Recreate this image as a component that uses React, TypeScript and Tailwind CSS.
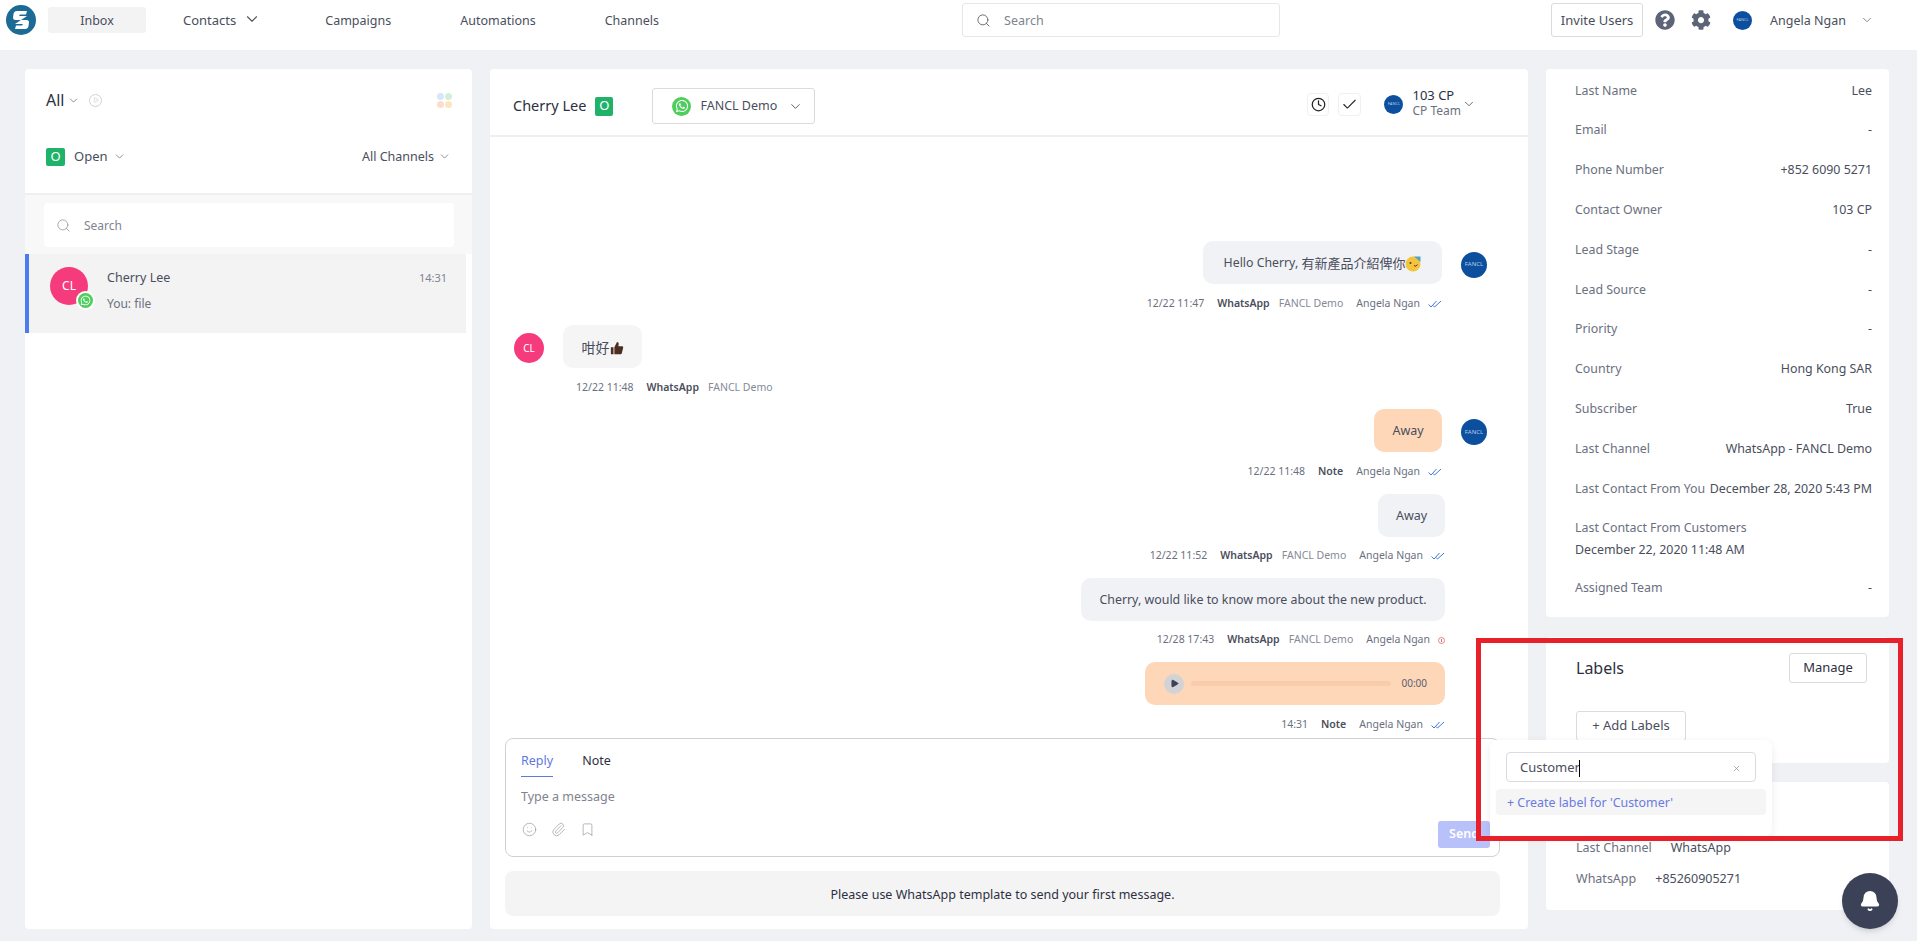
import type { ReactNode } from 'react'
import { Bell, ChevronDown, Paperclip, Search, Bookmark, Smile, Clock, Check, X, Play } from 'lucide-react'
import { FaWhatsapp, FaQuestionCircle, FaCog } from 'react-icons/fa'

const contactFields = [
  ['Last Name', 'Lee'],
  ['Email', '-'],
  ['Phone Number', '+852 6090 5271'],
  ['Contact Owner', '103 CP'],
  ['Lead Stage', '-'],
  ['Lead Source', '-'],
  ['Priority', '-'],
  ['Country', 'Hong Kong SAR'],
  ['Subscriber', 'True'],
  ['Last Channel', 'WhatsApp - FANCL Demo'],
  ['Last Contact From You', 'December 28, 2020 5:43 PM'],
]

function Logo() {
  return (
    <svg viewBox="0 0 30 30" className="w-[30px] h-[30px] shrink-0">
      <circle cx="15" cy="15" r="15" fill="#1c6b94" />
      <path d="M21 6 L11 6 Q8 6 7.5 9 L7 13 Q7 15 9.5 15 L15 15 L21 11 L13 11 L14 9.5 L20 9.5 Z" fill="#fff" />
      <path d="M9 24 L19 24 Q22 24 22.5 21 L23 17 Q23 15 20.500 15 L15 15 L9 19 L17 19 L16 20.500 L10 20.500 Z" fill="#fff" />
    </svg>
  )
}

function Fancl({ size = 26, text = 'text-[6px]' }: { size?: number; text?: string }) {
  return (
    <div
      className={`shrink-0 rounded-full bg-[#0b4f9e] text-[#b9cbe6] flex items-center justify-center ${text}`}
      style={{ width: size, height: size }}
    >
      FANCL
    </div>
  )
}

function WhatsDot({ size, icon }: { size: number; icon: number }) {
  return (
    <div
      className="rounded-full bg-[#4fce5d] flex items-center justify-center text-white shrink-0"
      style={{ width: size, height: size }}
    >
      <FaWhatsapp size={icon} />
    </div>
  )
}

function OBadge({ className }: { className: string }) {
  return <div className={`bg-[#1fb36a] text-white rounded-[2px] flex items-center justify-center ${className}`}>O</div>
}

function Ticks() {
  return (
    <svg viewBox="0 0 14 8" className="w-[14px] h-[8px] ml-[8px]" fill="none" stroke="#3f78d8" strokeWidth="1">
      <path d="M0.5 4.5 L3 7 L8.5 1" />
      <path d="M5 5.5 L6.5 7 L13 1" />
    </svg>
  )
}

function Failed() {
  return (
    <div className="ml-[8px] w-[7px] h-[7px] rounded-full border border-[#e8808a] flex items-center justify-center">
      <span className="w-px h-[3px] bg-[#e8636b]" />
    </div>
  )
}

function Meta({ time, channel, inbox, agent, end }: { time: string; channel: string; inbox?: string; agent?: string; end?: ReactNode }) {
  return (
    <div className="flex items-center text-[10.5px] h-[16px] pt-[2px] text-[#6b7080] whitespace-nowrap">
      <span>{time}</span>
      <span className="ml-[13px] font-semibold text-[#4a4e5c]">{channel}</span>
      {inbox && <span className="ml-[9px] text-[#868a98]">{inbox}</span>}
      {agent && <span className="ml-[13px]">{agent}</span>}
      {end}
    </div>
  )
}

function Bubble({ width, tone, children }: { width: number; tone: string; children: ReactNode }) {
  return (
    <div
      className={`h-[43px] pt-[2px] rounded-[10px] flex items-center justify-center whitespace-nowrap ${tone}`}
      style={{ width }}
    >
      {children}
    </div>
  )
}

export default function App() {
  return (
    <div
      className="relative h-[941px] overflow-hidden bg-[#eff1f5] text-[#4a4e5c] text-[12.5px]"
      style={{ fontFamily: '"Noto Sans", "Noto Sans CJK TC", sans-serif' }}
    >
      {/* top nav */}
      <header className="h-[50px] bg-white flex items-center pl-[6px] pr-[25px] pb-[10px]">
        <Logo />
        <div className="ml-[12px] w-[98px] h-[26px] pt-[2px] bg-[#f3f3f4] rounded-[3px] flex items-center justify-center">Inbox</div>
        <div className="ml-[37px] pt-[2px] flex items-center text-[13px]">
          Contacts
          <ChevronDown size={18} className="ml-[7px] -mt-[4px] text-[#555]" strokeWidth={1.5} />
        </div>
        <div className="ml-[64px] pt-[2px]">Campaigns</div>
        <div className="ml-[69px] pt-[2px]">Automations</div>
        <div className="ml-[69px] pt-[2px]">Channels</div>
        <div className="ml-[303px] w-[318px] h-[34px] border border-[#e6e7eb] rounded-[3px] flex items-center pl-[13px] text-[#80848f]">
          <Search size={15} strokeWidth={1.5} className="text-[#666]" />
          <span className="ml-[13px] pt-[2px]">Search</span>
        </div>
        <button className="ml-[271px] w-[92px] h-[34px] pt-[2px] border border-[#d9dbe0] rounded-[3px] text-[13px] text-[#4a4e5c]">Invite Users</button>
        <FaQuestionCircle size={20} className="ml-[12px] text-[#5d6478]" />
        <FaCog size={20} className="ml-[16px] text-[#5d6478]" />
        <div className="ml-[22px]">
          <Fancl size={19} text="text-[4px]" />
        </div>
        <span className="ml-[18px] pt-[2px]">Angela Ngan</span>
        <ChevronDown size={14} className="ml-[14px] text-[#777]" strokeWidth={1.5} />
      </header>

      <main className="flex pt-[19px] pl-[25px]">
        {/* conversation list */}
        <section className="w-[447px] h-[860px] bg-white rounded-[4px] shrink-0">
          <div className="h-[126px] px-[21px] border-b-2 border-[#eeeff1]">
            <div className="pt-[18px] flex items-center h-[44px] text-[16px] text-[#2d3040]">
              All
              <ChevronDown size={13} className="ml-[3px] text-[#777]" strokeWidth={1.5} />
              <div className="ml-[9px] w-[13px] h-[13px] rounded-full border border-[#cfd2d8] flex items-center justify-center">
                <Play size={6} className="text-[#bbb]" />
              </div>
              <div className="ml-auto -mr-[1px] grid grid-cols-2 gap-[1px]">
                <span className="w-[7px] h-[7px] rounded-full bg-[#d6e7fa]" />
                <span className="w-[7px] h-[7px] rounded-full bg-[#d3efd5]" />
                <span className="w-[7px] h-[7px] rounded-full bg-[#fbdccd]" />
                <span className="w-[7px] h-[7px] rounded-full bg-[#fbe7bf]" />
              </div>
            </div>
            <div className="mt-[34px] flex items-center">
              <OBadge className="w-[19px] h-[18px] text-[13px]" />
              <span className="ml-[9px] text-[13px]">Open</span>
              <ChevronDown size={13} className="ml-[5px] text-[#777]" strokeWidth={1.5} />
              <span className="ml-auto pt-[1px]">All Channels</span>
              <ChevronDown size={13} className="ml-[4px] text-[#777]" strokeWidth={1.5} />
            </div>
          </div>
          <div className="h-[59px] bg-[#f8f8f9] pl-[19px] pr-[18px] pt-[8px]">
            <div className="h-[44px] bg-white rounded-[4px] flex items-center pl-[12px] text-[12px] text-[#80848f]">
              <Search size={15} strokeWidth={1.3} className="text-[#999]" />
              <span className="ml-[13px] pt-[2px]">Search</span>
            </div>
          </div>
          <div className="h-[79px] w-[441px] bg-[#f3f3f4] border-l-4 border-[#4b7bec] flex pl-[21px] pt-[13px]">
            <div className="relative w-[38px] h-[38px] rounded-full bg-[#f63b7c] text-white text-[12px] flex items-center justify-center">
              CL
              <div className="absolute -right-[7px] -bottom-[5px] w-[19px] h-[19px] rounded-full bg-white flex items-center justify-center">
                <WhatsDot size={15} icon={11} />
              </div>
            </div>
            <div className="ml-[19px] pt-[2px]">
              <div>Cherry Lee</div>
              <div className="mt-[7px] text-[12px] text-[#6b7080]">You: file</div>
            </div>
            <div className="ml-auto mr-[19px] mt-[3px] text-[11px] text-[#80848f]">14:31</div>
          </div>
        </section>

        {/* chat */}
        <section className="ml-[18px] w-[1038px] h-[860px] bg-white rounded-[4px] shrink-0 flex flex-col">
          <div className="h-[68px] shrink-0 border-b-2 border-[#eeeff1] flex items-center pl-[23px] pr-[52px] pt-[8px]">
            <span className="text-[14.5px] text-[#2d3040]">Cherry Lee</span>
            <OBadge className="ml-[9px] w-[18px] h-[19px] text-[13px]" />
            <div className="ml-[39px] w-[163px] h-[36px] border border-[#d9dbe0] rounded-[3px] flex items-center pl-[19px]">
              <WhatsDot size={19} icon={14} />
              <span className="ml-[9px]">FANCL Demo</span>
              <ChevronDown size={15} className="ml-auto mr-[11px] text-[#555]" strokeWidth={1.5} />
            </div>
            <div className="ml-auto -mt-[4px] w-[22px] h-[23px] border border-[#f0f0f2] rounded-[4px] flex items-center justify-center">
              <Clock size={15} className="text-[#222]" />
            </div>
            <div className="ml-[9px] -mt-[4px] w-[23px] h-[23px] border border-[#f0f0f2] rounded-[4px] flex items-center justify-center">
              <Check size={17} className="text-[#222]" strokeWidth={1.5} />
            </div>
            <div className="ml-[23px] -mt-[4px]">
              <Fancl size={19} text="text-[4px]" />
            </div>
            <div className="ml-[9px] -mt-[6px] leading-[15px]">
              <div className="text-[13px] text-[#2d3040]">103 CP</div>
              <div className="text-[12px] text-[#6b7080]">CP Team</div>
            </div>
            <ChevronDown size={14} className="ml-[1px] -mt-[4px] text-[#555]" strokeWidth={1.5} />
          </div>

          <div className="h-[601px] shrink-0 flex flex-col pt-[104px] overflow-hidden">
            <div className="flex items-center justify-end pr-[41px]">
              <Bubble width={239} tone="bg-[#f1f2f6] text-[13px]">
                <span className="text-[12.3px]">Hello Cherry,&nbsp;</span>
                有新產品介紹俾你
                <svg viewBox="0 0 16 16" className="w-[16px] h-[16px]">
                  <circle cx="8" cy="8" r="7.5" fill="#f6c33c" />
                  <circle cx="5.5" cy="7" r="1" fill="#4a3a20" />
                  <path d="M9 9.5 q2 2 3.5 -1" stroke="#4a3a20" fill="none" />
                  <path d="M9 0.5 L15.500 0.500 L15.500 6 Z" fill="#4fa3c7" />
                </svg>
              </Bubble>
              <div className="ml-[19px] mt-[4px]">
                <Fancl />
              </div>
            </div>
            <div className="mt-[11px] flex justify-end pr-[86px]">
              <Meta time="12/22 11:47" channel="WhatsApp" inbox="FANCL Demo" agent="Angela Ngan" end={<Ticks />} />
            </div>

            <div className="mt-[14px] flex items-center pl-[24px]">
              <div className="mt-[3px] w-[30px] h-[30px] rounded-full bg-[#f63b7c] text-white text-[10px] flex items-center justify-center">CL</div>
              <div className="ml-[19px]">
                <Bubble width={79} tone="bg-[#f5f5f6] text-[14px]">
                  咁好
                  <svg viewBox="0 0 16 16" className="w-[14px] h-[14px]">
                    <path d="M1 7 h3 v8 h-3 Z M5 7 L8 1 q2 0 2 2 L9.5 6 H14 q1.5 0 1 2 l-1.5 6 q-.3 1 -1.5 1 H5 Z" fill="#4b2e20" />
                  </svg>
                </Bubble>
              </div>
            </div>
            <div className="mt-[11px] pl-[86px]">
              <Meta time="12/22 11:48" channel="WhatsApp" inbox="FANCL Demo" />
            </div>

            <div className="mt-[14px] flex items-center justify-end pr-[41px]">
              <Bubble width={68} tone="bg-[#fed7b9]">Away</Bubble>
              <div className="ml-[19px] mt-[3px]">
                <Fancl />
              </div>
            </div>
            <div className="mt-[11px] flex justify-end pr-[86px]">
              <Meta time="12/22 11:48" channel="Note" agent="Angela Ngan" end={<Ticks />} />
            </div>

            <div className="mt-[15px] flex justify-end pr-[83px]">
              <Bubble width={67} tone="bg-[#f1f2f6]">Away</Bubble>
            </div>
            <div className="mt-[10px] flex justify-end pr-[83px]">
              <Meta time="12/22 11:52" channel="WhatsApp" inbox="FANCL Demo" agent="Angela Ngan" end={<Ticks />} />
            </div>

            <div className="mt-[15px] flex justify-end pr-[83px]">
              <Bubble width={364} tone="bg-[#f1f2f6] text-[12.4px]">Cherry, would like to know more about the new product.</Bubble>
            </div>
            <div className="mt-[10px] flex justify-end pr-[83px]">
              <Meta time="12/28 17:43" channel="WhatsApp" inbox="FANCL Demo" agent="Angela Ngan" end={<Failed />} />
            </div>

            <div className="mt-[15px] flex justify-end pr-[83px]">
              <div className="w-[300px] h-[43px] bg-[#fed7b9] rounded-[10px] flex items-center pl-[19px] pr-[18px]">
                <div className="w-[20px] h-[20px] rounded-full bg-[#d3d3d6] flex items-center justify-center">
                  <Play size={9} className="text-[#3b4258] fill-[#3b4258]" />
                </div>
                <div className="ml-[7px] flex-1 h-[5px] rounded-full bg-[#f9ccab]" />
                <span className="ml-[10px] text-[10px] text-[#5b6070]">00:00</span>
              </div>
            </div>
            <div className="mt-[11px] flex justify-end pr-[83px]">
              <Meta time="14:31" channel="Note" agent="Angela Ngan" end={<Ticks />} />
            </div>
          </div>

          {/* composer */}
          <div className="ml-[15px] mr-[28px] h-[119px] shrink-0 border border-[#cfd1d6] rounded-[8px] pl-[15px] pr-[9px] pt-[13px]">
            <div className="flex h-[25px]">
              <div className="h-[25px] border-b border-[#6078e0] text-[#6078e0]">Reply</div>
              <div className="ml-[29px] text-[#2d3040]">Note</div>
            </div>
            <div className="mt-[11px] text-[#80848f]">Type a message</div>
            <div className="flex items-start h-[27px] mt-[14px]">
              <Smile size={15} strokeWidth={1} className="ml-[1px] mt-[1px] text-[#8a8e99]" />
              <Paperclip size={15} strokeWidth={1} className="ml-[14px] mt-[1px] text-[#8a8e99]" />
              <Bookmark size={15} strokeWidth={1} className="ml-[14px] mt-[1px] text-[#8a8e99]" />
              <div className="ml-auto w-[52px] h-[27px] rounded-[3px] bg-[#b9c1fb] text-white font-semibold flex items-center justify-center">Send</div>
            </div>
          </div>
          <div className="ml-[15px] mr-[28px] mt-[14px] h-[45px] pt-[4px] shrink-0 bg-[#f4f4f5] rounded-[8px] flex items-center justify-center text-[#2d3040]">
            Please use WhatsApp template to send your first message.
          </div>
        </section>

        {/* contact details */}
        <aside className="ml-[18px] w-[343px] shrink-0 flex flex-col relative z-10">
          <div className="h-[548px] bg-white rounded-[4px] pt-[2px] pl-[29px] pr-[17px] text-[12.4px]">
            {contactFields.map(([label, value]) => (
              <div key={label} className="h-[39.8px] flex items-center justify-between whitespace-nowrap">
                <span className="text-[#6b7080]">{label}</span>
                <span>{value}</span>
              </div>
            ))}
            <div className="h-[60px] flex flex-col justify-center leading-[22px]">
              <span className="text-[#6b7080]">Last Contact From Customers</span>
              <span>December 22, 2020 11:48 AM</span>
            </div>
            <div className="h-[40px] flex items-center justify-between">
              <span className="text-[#6b7080]">Assigned Team</span>
              <span>-</span>
            </div>
          </div>

          <div className="relative mt-[20px] h-[126px] bg-white rounded-[4px] pl-[30px] pr-[22px] pt-[16px] text-[13px]">
            <div className="flex items-center justify-between">
              <span className="text-[16px] text-[#2d3040]">Labels</span>
              <button className="w-[78px] h-[30px] border border-[#d9dbe0] rounded-[3px] text-[#2d3040]">Manage</button>
            </div>
            <button className="mt-[28px] w-[110px] h-[30px] border border-[#d9dbe0] rounded-[3px]">+ Add Labels</button>

            <div className="absolute left-[-56px] top-[103px] w-[282px] h-[97px] bg-white rounded-[8px] shadow-[0_2px_8px_rgba(0,0,0,0.08)] pt-[12px]">
              <div className="mx-[16px] h-[30px] pt-[2px] border border-[#d9dbe0] rounded-[4px] flex items-center pl-[13px] pr-[14px]">
                Customer
                <span className="w-px h-[17px] -ml-[1px] bg-black" />
                <X size={9} className="ml-auto text-[#999]" />
              </div>
              <div className="mx-[6px] mt-[7px] h-[26px] pt-[2px] bg-[#f5f5f6] rounded-[4px] flex items-center pl-[11px] text-[12.4px] text-[#6a7be0]">
                + Create label for 'Customer'
              </div>
            </div>
          </div>

          <div className="mt-[19px] h-[128px] bg-white rounded-[4px] pl-[30px] pb-[15px] flex flex-col justify-end">
            <div className="h-[31px] flex items-center">
              <span className="text-[#6b7080]">Last Channel</span>
              <span className="ml-[19px]">WhatsApp</span>
            </div>
            <div className="h-[31px] flex items-center">
              <span className="text-[#6b7080]">WhatsApp</span>
              <span className="ml-[19px]">+85260905271</span>
            </div>
          </div>
        </aside>
      </main>

      {/* highlight box drawn over the labels area */}
      <div className="absolute left-[1476px] top-[638px] w-[427px] h-[203px] border-[5px] border-[#e8202a] z-20 pointer-events-none" />

      <div className="absolute left-[1842px] top-[873px] w-[56px] h-[56px] rounded-full bg-[#3b4258] shadow-md flex items-center justify-center z-20">
        <Bell size={22} className="text-white fill-white" />
      </div>
    </div>
  )
}
